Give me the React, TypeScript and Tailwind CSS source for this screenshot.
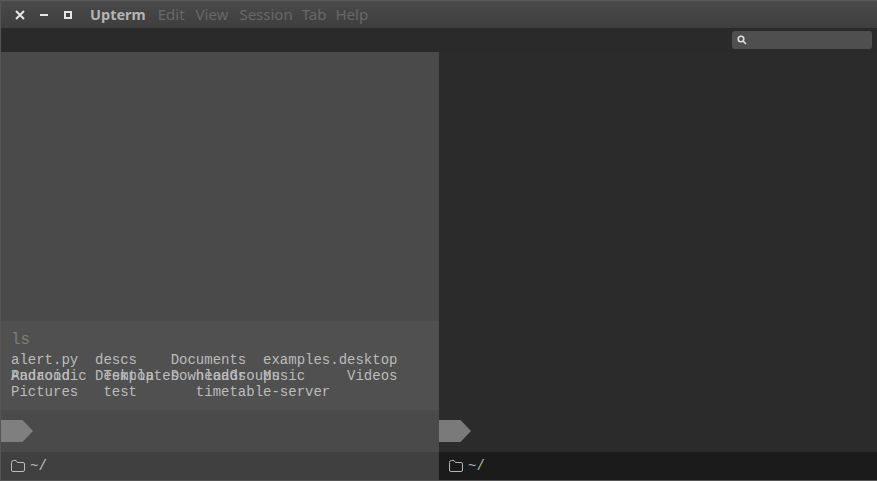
import React from "react";

const mono = "font-['Liberation_Mono',monospace] text-[14px] leading-[16px] whitespace-pre";

function Folder() {
  return (
    <svg width="14" height="12" viewBox="0 0 14 12" fill="none" stroke="currentColor" strokeWidth="1" className="shrink-0">
      <path d="M0.5 2.5 Q0.5 0.5 2.5 0.5 H5 L6.5 2.5 H12 Q13.5 2.5 13.5 4 V10 Q13.5 11.5 12 11.5 H2 Q0.5 11.5 0.5 10 Z" />
    </svg>
  );
}

function Arrow({ fill }: { fill: string }) {
  return (
    <svg width="32" height="22" viewBox="0 0 32 22" className="shrink-0">
      <path d="M0 0 H21.5 L32 11 L21.5 22 H0 Z" fill={fill} />
    </svg>
  );
}

export default function App() {
  return (
    <div className="w-[877px] h-[481px] flex flex-col overflow-hidden bg-[#2b2b2b] border-l border-b border-[#555] font-['Liberation_Sans',sans-serif]">
      <div className="h-[28px] shrink-0 flex items-center bg-gradient-to-b from-[#4a4a4a] to-[#3e3e3e] border-t border-[#5a5a5a] font-['Noto_Sans',sans-serif] text-[15px]">
        <div className="flex items-center gap-[14px] ml-[14px] w-[75px]">
          <svg width="10" height="10" viewBox="0 0 10 10" stroke="#e6e6e6" strokeWidth="2"><path d="M1 1 L9 9 M9 1 L1 9" /></svg>
          <svg width="10" height="10" viewBox="0 0 10 10" stroke="#e6e6e6" strokeWidth="2"><path d="M1 5 H9" /></svg>
          <svg width="10" height="10" viewBox="0 0 10 10" stroke="#e6e6e6" strokeWidth="2" fill="none"><rect x="2" y="2" width="6" height="6" /></svg>
        </div>
        <span className="font-bold text-[14.5px] text-[#b4b4b4]">Upterm</span>
        <span className="ml-[12px] text-[#686868]">Edit</span>
        <span className="ml-[11px] text-[#686868]">View</span>
        <span className="ml-[11px] text-[#686868]">Session</span>
        <span className="ml-[9px] text-[#686868]">Tab</span>
        <span className="ml-[9px] text-[#686868]">Help</span>
      </div>
      <div className="h-[24px] shrink-0 flex items-center justify-end pr-[5px] bg-[#2a2a2a]">
        <div className="w-[140px] h-[18px] rounded-[3px] bg-[#4f4f4f] flex items-center pl-[5px]">
          <svg width="10" height="10" viewBox="0 0 10 10" fill="none" stroke="#e0e0e0" strokeWidth="1.6"><circle cx="4" cy="4" r="2.8" /><path d="M6 6 L9 9" /></svg>
        </div>
      </div>
      <div className="flex-1 flex min-h-0">
        <div className="w-[438px] shrink-0 flex flex-col bg-[#4a4a4a]">
          <div className="flex-1" />
          <div className={`h-[89px] bg-[#505050] pl-[10px] pt-[10px] text-[#bcbcbc] ${mono}`}>
            <div className="text-[16px] leading-[18px] text-[#7c7c7c] mb-[3px]">ls</div>
            <div>{"alert.py  descs    Documents  examples.desktop"}</div>
            <div className="grid">
              <div className="[grid-area:1/1]">{"Android   Desktop  Downloads  Music     Videos"}</div>
              <div className="[grid-area:1/1]">{"Padaoodic  Templates  headGroups"}</div>
            </div>
            <div>{"Pictures   test       timetable-server"}</div>
          </div>
          <div className="h-[42px] shrink-0 flex items-center bg-[#4a4a4a]">
            <Arrow fill="#7f7f7f" />
          </div>
          <div className="h-[28px] shrink-0 flex items-center gap-[5px] pl-[10px] bg-[#404040] text-[#bdbdbd] text-[14px] font-['Liberation_Mono',monospace]">
            <Folder />
            <span>~/</span>
          </div>
        </div>
        <div className="flex-1 flex flex-col">
          <div className="flex-1" />
          <div className="h-[42px] shrink-0 flex items-center">
            <Arrow fill="#7a7a7a" />
          </div>
          <div className="h-[28px] shrink-0 flex items-center gap-[5px] pl-[10px] bg-[#1b1b1b] text-[#b5b5b5] text-[14px] font-['Liberation_Mono',monospace]">
            <Folder />
            <span>~/</span>
          </div>
        </div>
      </div>
    </div>
  );
}
